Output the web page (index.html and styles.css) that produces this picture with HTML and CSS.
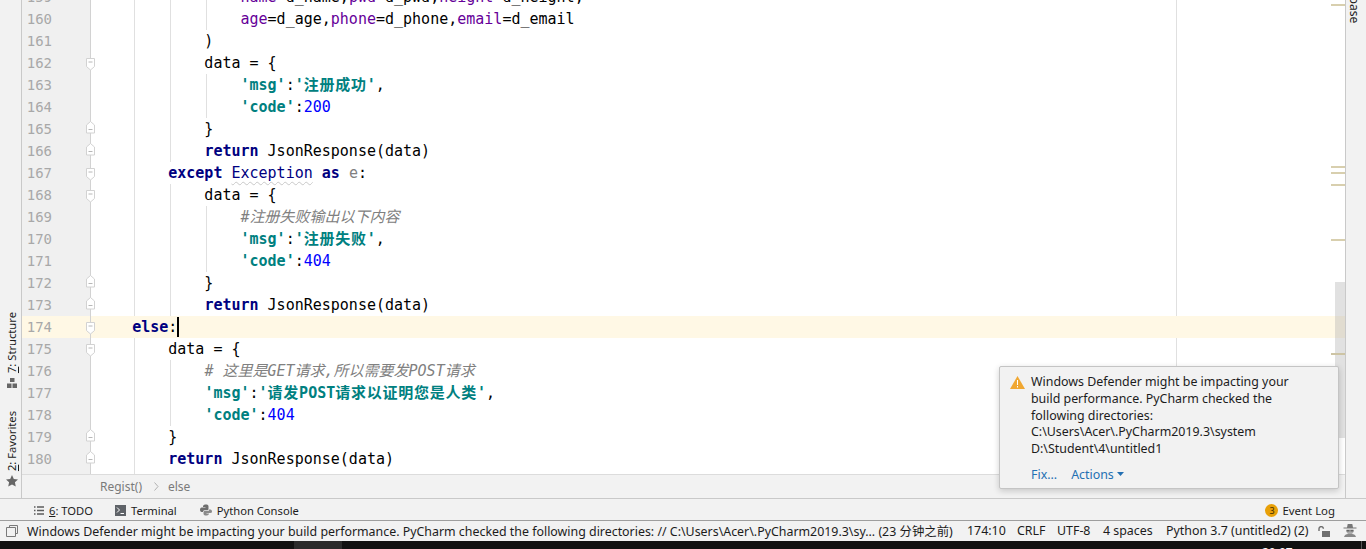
FILE: index.html
```html
<!DOCTYPE html>
<html lang="en">
<head>
<meta charset="utf-8">
<title>PyCharm</title>
<link rel="stylesheet" href="styles.css">
</head>
<body>
<svg class="defs" width="0" height="0">
  <symbol id="fold-open" viewBox="0 0 9 13"><path d="M.5 .5h8v8l-4 3.500-4-3.500z" fill="#fff" stroke="#d2d2d2"/><path d="M2.500 4h4" stroke="#b8b8b8"/></symbol>
  <symbol id="fold-close" viewBox="0 0 9 13"><path d="M.5 12h8v-8l-4-3.500-4 3.500z" fill="#fff" stroke="#d2d2d2"/><path d="M2.500 8.500h4" stroke="#b8b8b8"/></symbol>
</svg>
<div class="app">
  <div class="workspace">
    <aside class="left-strip">
      <div class="side-tool tool-structure">
        <span class="vtext"><u>7</u>: Structure</span>
        <svg class="side-icon" width="10" height="10" viewBox="0 0 10 10"><rect x="3" y="0" width="4.500" height="4" fill="#666"/><rect x="0" y="5.500" width="4.500" height="4.500" fill="#666"/><rect x="5.500" y="5.500" width="4.500" height="4.500" fill="#666"/></svg>
      </div>
      <div class="side-tool tool-favorites">
        <span class="vtext"><u>2</u>: Favorites</span>
        <svg class="side-icon" width="12" height="12" viewBox="0 0 14 14"><path d="M7 0l2.100 4.600 4.900.6-3.600 3.400 1 4.900L7 11.100 2.600 13.500l1-4.900L0 5.200l4.900-.6z" fill="#666"/></svg>
      </div>
    </aside>
    <div class="center">
      <div class="editor">
        <i class="guide g135 g-a"></i><i class="guide g135 g-b"></i>
        <i class="guide g171 g-c"></i><i class="guide g171 g-d"></i><i class="guide g171 g-e"></i>
        <i class="guide g207 g-f"></i><i class="guide g207 g-g"></i><i class="guide g207 g-h"></i>
        <i class="margin-line"></i>
        <div class="ln"><span class="no">159</span><span class="code">                <b class="kw2">name</b>=d_name,<b class="kw2">pwd</b>=d_pwd,<b class="kw2">height</b>=d_height,</span></div>
        <div class="ln"><span class="no">160</span><span class="code">                <b class="kw2">age</b>=d_age,<b class="kw2">phone</b>=d_phone,<b class="kw2">email</b>=d_email</span></div>
        <div class="ln"><span class="no">161</span><span class="code">            )</span></div>
        <div class="ln"><span class="no">162</span><svg class="fold open"><use href="#fold-open"/></svg><span class="code">            data = {</span></div>
        <div class="ln"><span class="no">163</span><span class="code">                <b class="str">'msg'</b>:<b class="str">'<span class="han">注册成功</span>'</b>,</span></div>
        <div class="ln"><span class="no">164</span><span class="code">                <b class="str">'code'</b>:<span class="num">200</span></span></div>
        <div class="ln"><span class="no">165</span><svg class="fold close"><use href="#fold-close"/></svg><span class="code">            }</span></div>
        <div class="ln"><span class="no">166</span><svg class="fold close"><use href="#fold-close"/></svg><span class="code">            <b class="kw">return</b> JsonResponse(data)</span></div>
        <div class="ln"><span class="no">167</span><svg class="fold open"><use href="#fold-open"/></svg><span class="code">        <b class="kw">except</b> <span class="bi">Exception</span> <b class="kw">as</b> <span class="dim">e</span>:</span></div>
        <div class="ln"><span class="no">168</span><svg class="fold open"><use href="#fold-open"/></svg><span class="code">            data = {</span></div>
        <div class="ln"><span class="no">169</span><span class="code">                <em class="cm">#注册失败输出以下内容</em></span></div>
        <div class="ln"><span class="no">170</span><span class="code">                <b class="str">'msg'</b>:<b class="str">'<span class="han">注册失败</span>'</b>,</span></div>
        <div class="ln"><span class="no">171</span><span class="code">                <b class="str">'code'</b>:<span class="num">404</span></span></div>
        <div class="ln"><span class="no">172</span><svg class="fold close"><use href="#fold-close"/></svg><span class="code">            }</span></div>
        <div class="ln"><span class="no">173</span><svg class="fold close"><use href="#fold-close"/></svg><span class="code">            <b class="kw">return</b> JsonResponse(data)</span></div>
        <div class="ln current"><span class="no">174</span><svg class="fold open"><use href="#fold-open"/></svg><span class="code">    <b class="kw">else</b>:<i class="caret"></i></span></div>
        <div class="ln"><span class="no">175</span><svg class="fold open"><use href="#fold-open"/></svg><span class="code">        data = {</span></div>
        <div class="ln"><span class="no">176</span><span class="code">            <em class="cm"># 这里是GET请求,所以需要发POST请求</em></span></div>
        <div class="ln"><span class="no">177</span><span class="code">            <b class="str">'msg'</b>:<b class="str">'<span class="han">请发</span>POST<span class="han">请求以证明您是人类</span>'</b>,</span></div>
        <div class="ln"><span class="no">178</span><span class="code">            <b class="str">'code'</b>:<span class="num">404</span></span></div>
        <div class="ln"><span class="no">179</span><svg class="fold close"><use href="#fold-close"/></svg><span class="code">        }</span></div>
        <div class="ln"><span class="no">180</span><svg class="fold close"><use href="#fold-close"/></svg><span class="code">        <b class="kw">return</b> JsonResponse(data)</span></div>
        <i class="mark m1"></i><i class="mark m2"></i><i class="mark m3"></i><i class="mark m4"></i><i class="mark m5"></i>
        <i class="thumb"></i>
        <i class="mark m6"></i>
      </div>
      <div class="breadcrumb">
        <span>Regist()</span>
        <svg class="crumb-sep" width="5" height="9" viewBox="0 0 5 9"><path d="M.5.500l3.500 4-3.500 4" fill="none" stroke="#b0b0b0"/></svg>
        <span>else</span>
      </div>
    </div>
    <aside class="right-strip"><span class="vtext-right">Database</span></aside>
  </div>
  <div class="toolbar">
    <span class="tool tool-todo">
      <svg width="10" height="9" viewBox="0 0 10 9"><path d="M0 1h1.500M3 1h7M0 4.500h1.500M3 4.500h7M0 8h1.500M3 8h7" stroke="#5c5c5c" stroke-width="1.300"/></svg>
      <span><u>6</u>: TODO</span>
    </span>
    <span class="tool tool-term">
      <svg width="11" height="11" viewBox="0 0 11 11"><rect width="11" height="11" fill="#5f6368"/><path d="M2 2.500l2.500 2.500L2 7.500M5.500 8.500H9" fill="none" stroke="#fff"/></svg>
      <span>Terminal</span>
    </span>
    <span class="tool tool-py">
      <svg width="12" height="12" viewBox="0 0 12 12"><path d="M3 5V2.500C3 1 4.500.5 6 .5S8.500 1 8.500 2.500V5c0 .8-.6 1.300-1.300 1.300H4.500C3.500 6.300 3 7 3 8H1.600C.6 8 0 7 0 5.800S.6 3.500 1.600 3.500H5.500V3H3z" fill="#6f6f6f"/><path d="M9 7v2.500C9 11 7.500 11.500 6 11.500S3.500 11 3.500 9.500V8.400c0-.8.600-1.300 1.300-1.300h2.700c1 0 1.500-.7 1.500-1.700h1.400c1 0 1.600 1 1.600 2.200S11.400 9 10.400 9H6.500v.5H9z" fill="#8a8a8a"/></svg>
      <span>Python Console</span>
    </span>
    <span class="tool tool-log"><span class="badge">3</span><span>Event Log</span></span>
  </div>
  <div class="statusbar">
    <svg class="status-box" width="12" height="12" viewBox="0 0 12 12"><path d="M3.500 2.500V.5h8v8h-2M.5 2.500h9v9h-9z" fill="none" stroke="#7a7a7a"/></svg>
    <span class="status-msg">Windows Defender might be impacting your build performance. PyCharm checked the following directories: // C:\Users\Acer\.PyCharm2019.3\sy... (23 分钟之前)</span>
    <span class="s-pos">174:10</span>
    <span class="s-crlf">CRLF</span>
    <span class="s-enc">UTF-8</span>
    <span class="s-ind">4 spaces</span>
    <span class="s-py">Python 3.7 (untitled2) (2)</span>
    <svg class="s-lock" width="12" height="11" viewBox="0 0 12 11"><path d="M1 5V2.800a2.200 2.200 0 0 1 4.400 0" fill="none" stroke="#6e6e6e" stroke-width="1.400"/><rect x="4" y="5" width="8" height="6" fill="#6e6e6e"/></svg>
    <svg class="s-hector" width="14" height="13" viewBox="0 0 14 13"><path d="M4 3.500l.7-3.500h4.600L10 3.500h3.500v1H.5v-1z" fill="#777"/><path d="M3.500 5.500h7v2.500l-1.500 2h-4l-1.500-2z" fill="#aaa"/><path d="M3.500 6h3v1.500h-3zM7.500 6h3v1.500h-3z" fill="#666"/><path d="M1 13c.5-2 2-3 4-3h4c2 0 3.500 1 4 3z" fill="#888"/></svg>
  </div>
  <div class="taskbar"><span class="task-seg"></span><span class="clock">20:07</span><span class="task-end"></span></div>
  <div class="notification">
    <div class="n-body">
      <svg class="n-warn" width="15" height="13" viewBox="0 0 15 13"><path d="M7.500 0L15 13H0z" fill="#f0a732"/><path d="M7 4h1v5H7zM7 10h1v1.500H7z" fill="#fff"/></svg>
      <p class="n-text">Windows Defender might be impacting your build performance. PyCharm checked the following directories:<br>C:\Users\Acer\.PyCharm2019.3\system<br>D:\Student\4\untitled1</p>
    </div>
    <div class="n-links"><span>Fix...</span><span class="n-actions">Actions<svg width="7" height="4" viewBox="0 0 7 4"><path d="M0 0h7L3.500 4z" fill="#2470b3"/></svg></span></div>
  </div>
</div>
</body>
</html>
```
FILE: styles.css
```css
html, body { margin: 0; padding: 0; height: 100%; overflow: hidden; background: #f2f2f2; }
.defs { position: absolute; }
.app { position: relative; display: flex; flex-direction: column; height: 549px; width: 1366px; overflow: hidden; font-family: "Noto Sans", "Noto Sans CJK SC", sans-serif; font-size: 12.4px; color: #1c1c1c; }
.workspace { display: flex; height: 499px; flex: none; border-bottom: 1px solid #c9c9c9; box-sizing: border-box; }
.left-strip { width: 21px; flex: none; background: #f2f2f2; border-right: 1px solid #c9c9c9; display: flex; flex-direction: column; align-items: center; justify-content: flex-end; padding-bottom: 11px; box-sizing: content-box; height: 487px; }
.side-tool { display: flex; flex-direction: column; align-items: center; margin-left: 2px; }
.tool-structure { margin-bottom: 23px; gap: 5px; }
.tool-favorites { gap: 4px; }
.vtext { writing-mode: vertical-rl; transform: rotate(180deg); font-size: 11.2px; line-height: 14px; white-space: nowrap; }
.center { flex: 1; min-width: 0; display: flex; flex-direction: column; }
.editor { position: relative; flex: none; height: 474px; overflow: hidden; background: linear-gradient(to right, #f0f0f0 0, #f0f0f0 68px, #d2d2d2 68px, #d2d2d2 69px, #fff 69px); box-sizing: border-box; }
.ln { position: relative; display: flex; height: 22px; line-height: 22px; font-family: "DejaVu Sans Mono", "Noto Sans CJK SC", monospace; font-size: 15px; color: #000; }
.ln:first-of-type { margin-top: -14px; }
.ln.current { background: linear-gradient(to right, #fff8e5 0, #fff8e5 68px, #d2d2d2 68px, #d2d2d2 69px, #fff8e5 69px); }
.no { width: 30px; flex: none; text-align: right; color: #a8a8a8; font-size: 14px; }
.code { position: absolute; left: 74px; top: 0; white-space: pre; }
.fold { position: absolute; left: 64px; width: 9px; height: 13px; }
.fold.open { top: 6px; }
.fold.close { top: 3px; }
.kw { color: #000080; font-weight: 700; }
.kw2 { color: #660099; font-weight: 400; }
.bi { color: #000080; text-decoration: underline wavy #c8c8c8 1px; text-underline-offset: 3px; }
.str { color: #008080; font-weight: 700; }
.han { letter-spacing: .75px; }
.num { color: #0000ff; }
.cm { color: #808080; font-style: italic; }
.dim { color: #808080; }
.caret { display: inline-block; width: 2px; height: 20px; background: #000; vertical-align: -5px; }
.guide { position: absolute; width: 1px; background: #e0e0e0; }
.g135 { left: 112px; } .g171 { left: 148px; } .g207 { left: 184px; }
.g-a { top: 0; height: 316px; } .g-b { top: 338px; height: 136px; }
.g-c { top: 0; height: 162px; } .g-d { top: 184px; height: 132px; } .g-e { top: 360px; height: 66px; }
.g-f { top: 0; height: 30px; } .g-g { top: 74px; height: 44px; } .g-h { top: 206px; height: 66px; }
.margin-line { position: absolute; left: 1154px; top: 0; bottom: 0; width: 1px; background: #e0e0e0; }
.thumb { position: absolute; right: 0; top: 282px; width: 10px; height: 156px; background: rgba(170,170,170,.35); }
.mark { position: absolute; right: 0; width: 14px; height: 2px; background: #d8cfae; }
.m1 { top: 4px; } .m2 { top: 166px; } .m3 { top: 172px; } .m4 { top: 184px; } .m5 { top: 239px; } .m6 { top: 353px; background: #cdc4a4; }
.breadcrumb { flex: 1; display: flex; align-items: center; background: #f2f2f2; border-top: 1px solid #dcdcdc; padding-left: 78px; font-size: 12px; color: #7a7a7a; }
.crumb-sep { margin: 0 9px 0 12px; }
.right-strip { width: 20px; flex: none; background: #f2f2f2; border-left: 1px solid #c9c9c9; overflow: hidden; }
.vtext-right { display: block; writing-mode: vertical-rl; font-size: 12px; line-height: 14px; margin-top: -30px; margin-left: 1px; color: #1c1c1c; white-space: nowrap; }
.toolbar { display: flex; align-items: center; height: 20px; padding-top: 1px; flex: none; background: #f2f2f2; border-bottom: 1px solid #9e9e9e; padding-left: 34px; font-size: 11.2px; }
.tool { display: flex; align-items: center; gap: 5px; white-space: nowrap; }
.tool-term { margin-left: 22px; }
.tool-py { margin-left: 23px; }
.tool-log { margin-left: auto; margin-right: 31px; gap: 4px; font-size: 11.4px; }
.badge { width: 13px; height: 13px; border-radius: 50%; background: #e8a008; display: flex; align-items: center; justify-content: center; font-size: 9px; line-height: 13px; color: #3a2a00; }
.statusbar { position: relative; display: flex; align-items: center; height: 19px; padding-bottom: 1px; flex: none; background: #f2f2f2; white-space: nowrap; }
.status-box { margin-left: 6px; flex: none; }
.status-msg { margin-left: 9px; }
.s-pos { position: absolute; left: 967px; }
.s-crlf { position: absolute; left: 1017px; }
.s-enc { position: absolute; left: 1057px; }
.s-ind { position: absolute; left: 1103px; }
.s-py { position: absolute; left: 1166px; }
.s-lock { position: absolute; left: 1318px; top: 5px; }
.s-hector { position: absolute; left: 1343px; top: 3px; }
.taskbar { position: relative; flex: 1; background: #111; overflow: hidden; }
.task-seg { position: absolute; left: 294px; top: 0; width: 48px; height: 100%; background: #2b2b2b; }
.clock { position: absolute; left: 1262px; top: 5px; color: #fff; font-size: 12px; line-height: 14px; }
.task-end { position: absolute; left: 1361px; top: 0; width: 1px; height: 100%; background: #555; }
.notification { position: absolute; left: 999px; top: 366px; width: 340px; height: 123px; box-sizing: border-box; background: #f2f2f2; border: 1px solid #c4c4c4; border-radius: 2px; box-shadow: 0 2px 6px rgba(0,0,0,.18); padding: 7px 10px 0 10px; }
.n-body { display: flex; gap: 6px; }
.n-warn { flex: none; margin-top: 2px; }
.n-text { margin: 0; width: 270px; font-size: 12.4px; line-height: 16.75px; color: #1c1c1c; }
.n-links { display: flex; gap: 14px; margin: 8px 0 0 21px; color: #2470b3; font-size: 12.4px; line-height: 17px; }
.n-actions { display: inline-flex; align-items: center; gap: 3px; }
```
